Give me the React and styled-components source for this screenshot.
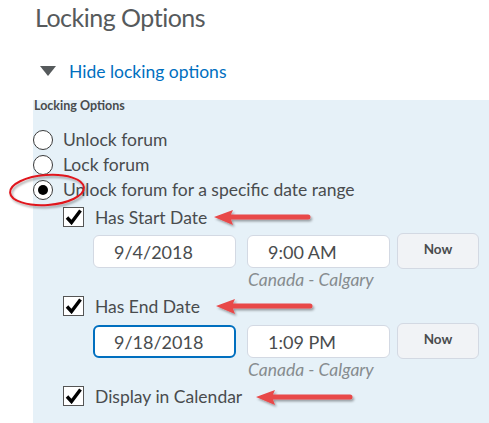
import React from "react";
import styled, { createGlobalStyle } from "styled-components";

const Global = createGlobalStyle`
  html, body { margin: 0; padding: 0; background: #fff; }
  body { font-family: Lato, "Open Sans", sans-serif; color: #494c4e; }
`;

const Page = styled.div`
  position: relative;
  width: 489px;
  height: 423px;
  overflow: hidden;
  padding-left: 33px;
  box-sizing: border-box;
  display: flex;
  flex-direction: column;
`;

const Title = styled.h1`
  margin: 2px 0 0 2px;
  font-size: 25px;
  font-weight: 400;
  letter-spacing: -0.5px;
  line-height: 30px;
  color: #565a5c;
`;

const Toggle = styled.div`
  display: flex;
  align-items: center;
  gap: 13px;
  margin: 24px 0 0 7px;
  height: 30px;
  color: #006fbf;
  font-size: 17.5px;
`;

const Triangle = styled.span`
  width: 0;
  height: 0;
  border-left: 8.5px solid transparent;
  border-right: 8.5px solid transparent;
  border-top: 10px solid #565a5c;
`;

const Panel = styled.div`
  margin-top: 14px;
  flex: 1;
  background: #e6f1f8;
  display: flex;
  flex-direction: column;
`;

const Legend = styled.div`
  font-size: 12.5px;
  font-weight: 700;
  line-height: 12px;
  height: 14px;
  margin-left: 1px;
`;

const RadioList = styled.div`
  margin-top: 13px;
  display: flex;
  flex-direction: column;
`;

const RadioRow = styled.label`
  display: flex;
  align-items: center;
  gap: 10px;
  height: 25px;
  font-size: 17.5px;
`;

const RadioCircle = styled.span`
  width: 20px;
  height: 20px;
  box-sizing: border-box;
  border-radius: 50%;
  border: 1px solid #3a3a3a;
  background: #fff;
  display: flex;
  align-items: center;
  justify-content: center;
  &::after {
    content: "";
    width: 10px;
    height: 10px;
    border-radius: 50%;
    background: ${(p) => (p.$checked ? "#000" : "transparent")};
  }
`;

const Nested = styled.div`
  margin-left: 30px;
  display: flex;
  flex-direction: column;
`;

const CheckRow = styled.label`
  display: flex;
  align-items: center;
  gap: 11px;
  height: 26px;
  margin-top: ${(p) => p.$mt}px;
  font-size: 17.5px;
`;

const CheckBox = styled.span`
  width: 21px;
  height: 20px;
  box-sizing: border-box;
  border: 1px solid #555;
  background: #fff;
  display: flex;
  align-items: center;
  justify-content: center;
`;

const DateRow = styled.div`
  display: flex;
  align-items: flex-start;
  margin-left: 30px;
  margin-top: ${(p) => p.$mt}px;
`;

const Field = styled.div`
  width: 143px;
  height: 33px;
  margin-top: 2px;
  margin-right: ${(p) => p.$mr}px;
  box-sizing: border-box;
  background: #fff;
  border: ${(p) => (p.$focus ? "2px solid #006fbf" : "1px solid #d3d9e3")};
  border-radius: 6px;
  padding-left: ${(p) => (p.$focus ? 19 : 20)}px;
  display: flex;
  align-items: center;
  font-size: 18px;
  color: #494c4e;
`;

const NowButton = styled.button`
  width: 82px;
  height: 36px;
  box-sizing: border-box;
  background: #f1f3f6;
  border: 1px solid #d3d9e3;
  border-radius: 6px;
  font-family: Lato, sans-serif;
  font-weight: 700;
  font-size: 13.5px;
  color: #494c4e;
  padding: 0 0 4px;
`;

const Zone = styled.div`
  margin: 2px 0 0 185px;
  font-size: 17.5px;
  font-style: italic;
  line-height: 18px;
  color: #868c8f;
`;

const Overlay = styled.svg`
  position: absolute;
  left: 0;
  top: 0;
  pointer-events: none;
`;

const Check = () => (
  <svg width="17" height="16" viewBox="0 0 17 16">
    <path d="M2 8.5 L6.5 13.5 L15.5 1.5" fill="none" stroke="#000" strokeWidth="3.4" strokeLinejoin="miter" strokeLinecap="butt" />
  </svg>
);

const Arrow = ({ x1, x2, y }) => (
  <g filter="url(#shadow)">
    <path
      d={`M${x1} ${y} L${x1 + 19} ${y - 7} L${x1 + 17} ${y - 2.5} L${x2} ${y - 2.5} A2.5 2.5 0 0 1 ${x2} ${y + 2.5} L${x1 + 17} ${y + 2.5} L${x1 + 19} ${y + 8} Z`}
      fill="#e8484a"
    />
  </g>
);

export default function App() {
  return (
    <>
      <Global />
      <Page>
        <Title>Locking Options</Title>
        <Toggle>
          <Triangle />
          <span>Hide locking options</span>
        </Toggle>
        <Panel>
          <Legend>Locking Options</Legend>
          <RadioList>
            <RadioRow><RadioCircle />Unlock forum</RadioRow>
            <RadioRow><RadioCircle />Lock forum</RadioRow>
            <RadioRow><RadioCircle $checked />Unlock forum for a specific date range</RadioRow>
          </RadioList>
          <Nested>
            <CheckRow $mt={2}><CheckBox><Check /></CheckBox>Has Start Date</CheckRow>
            <DateRow $mt={3}>
              <Field $mr={11}>9/4/2018</Field>
              <Field $mr={7}>9:00 AM</Field>
              <NowButton>Now</NowButton>
            </DateRow>
            <Zone>Canada - Calgary</Zone>
            <CheckRow $mt={4}><CheckBox><Check /></CheckBox>Has End Date</CheckRow>
            <DateRow $mt={4}>
              <Field $mr={11} $focus>9/18/2018</Field>
              <Field $mr={7}>1:09 PM</Field>
              <NowButton>Now</NowButton>
            </DateRow>
            <Zone>Canada - Calgary</Zone>
            <CheckRow $mt={4}><CheckBox><Check /></CheckBox>Display in Calendar</CheckRow>
          </Nested>
        </Panel>
        <Overlay width="489" height="423" viewBox="0 0 489 423">
          <defs>
            <filter id="shadow" x="-20%" y="-50%" width="140%" height="250%">
              <feDropShadow dx="1.5" dy="2" stdDeviation="1.2" floodColor="#000" floodOpacity="0.35" />
            </filter>
          </defs>
          <g filter="url(#shadow)">
            <ellipse cx="47" cy="190" rx="37" ry="15" transform="rotate(-4 47 190)" fill="none" stroke="#e0161e" strokeWidth="2" />
          </g>
          <Arrow x1={214} x2={308} y={217} />
          <Arrow x1={216} x2={310} y={306} />
          <Arrow x1={256} x2={350} y={397} />
        </Overlay>
      </Page>
    </>
  );
}
